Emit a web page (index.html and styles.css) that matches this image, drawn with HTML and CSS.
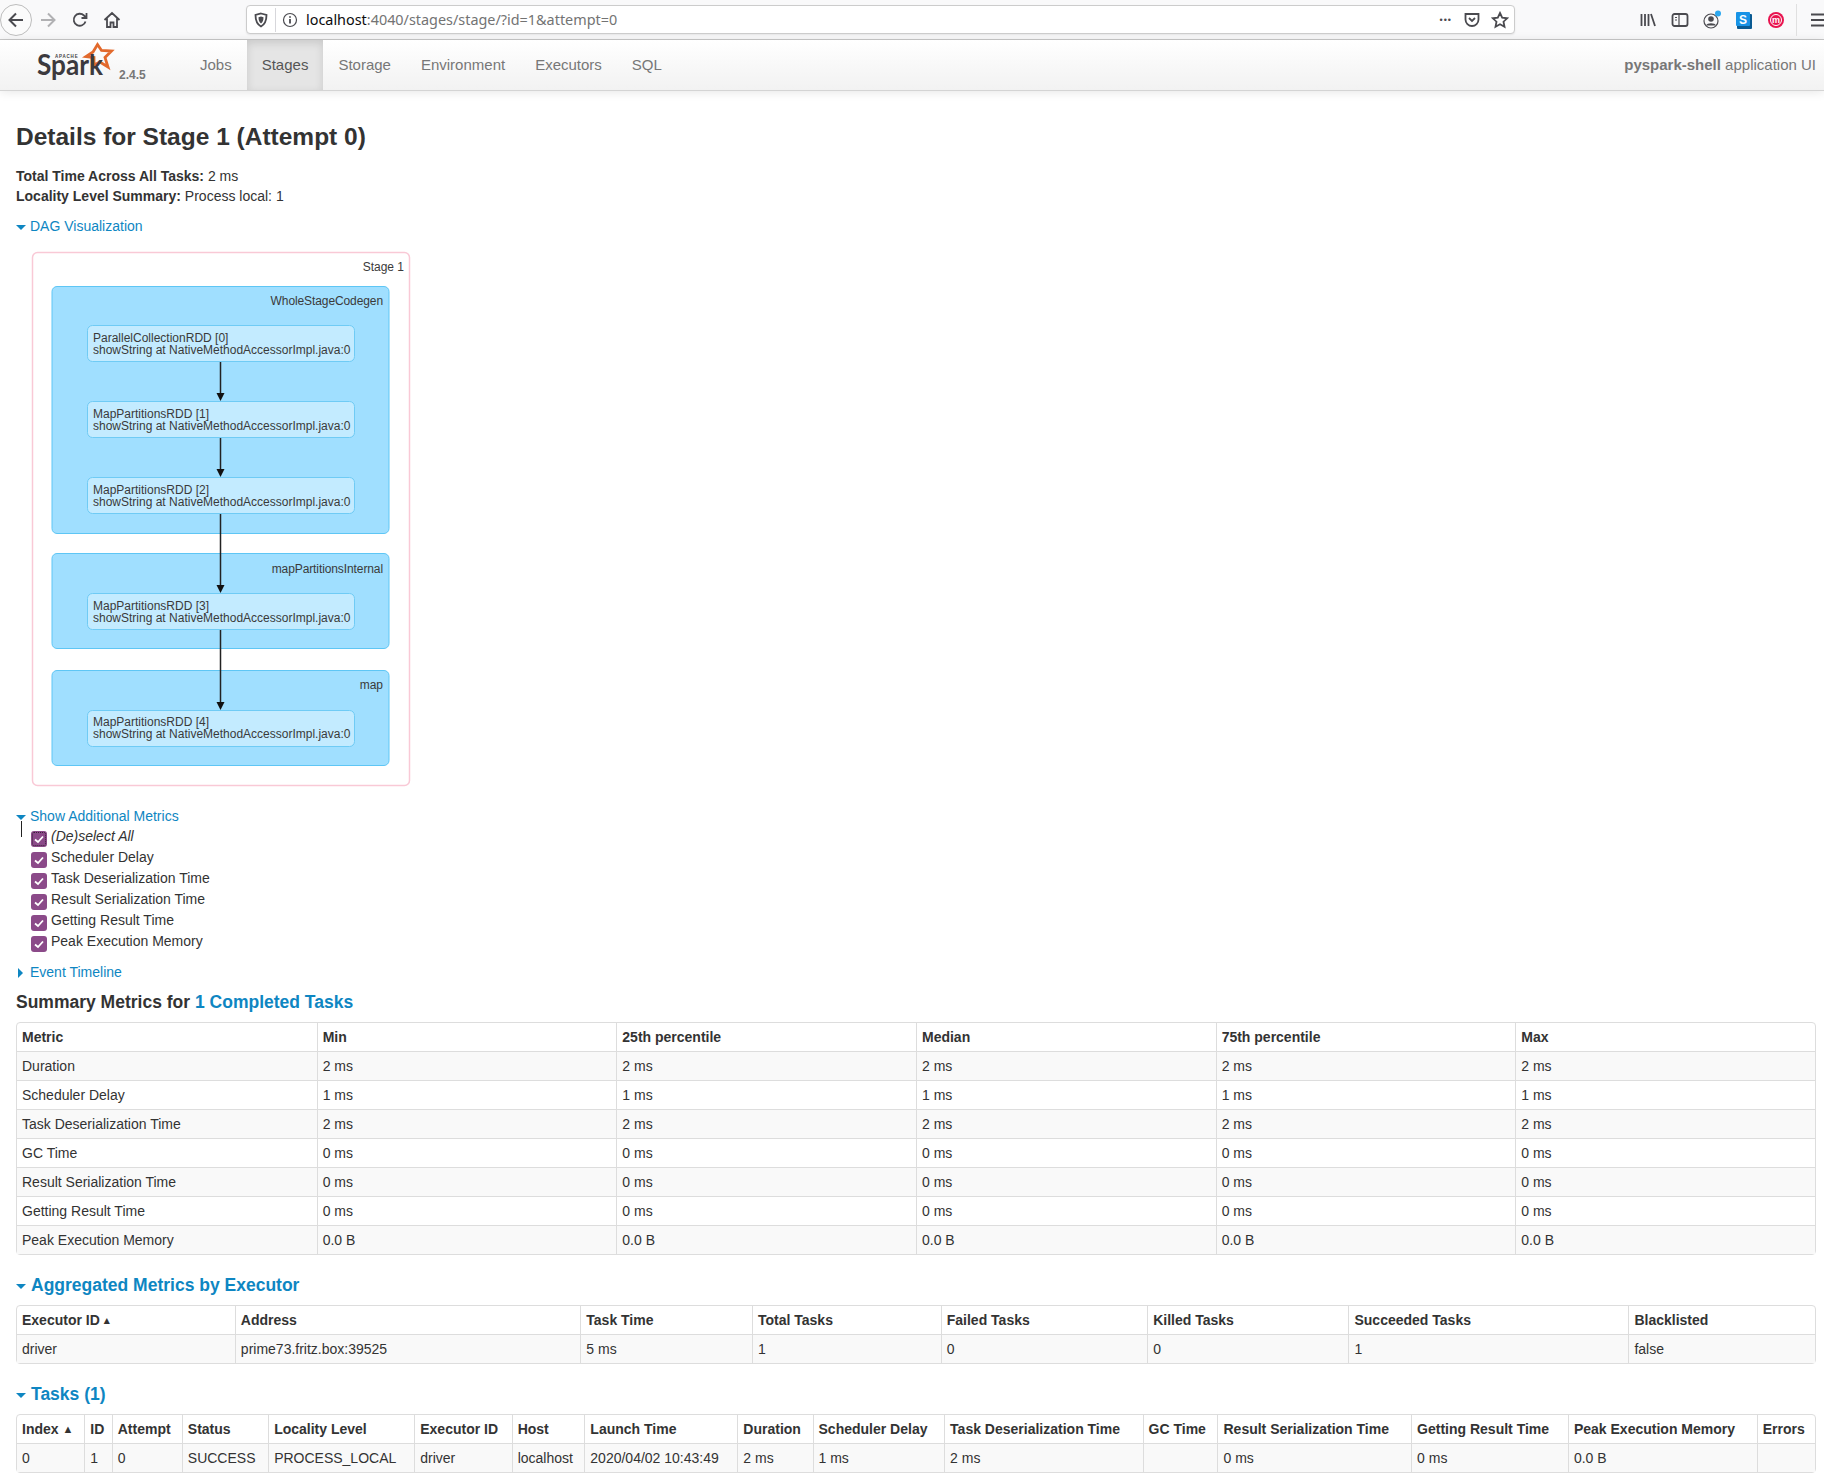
FILE: index.html
```html
<!DOCTYPE html>
<html lang="en">
<head>
  <meta charset="UTF-8">
  <title>pyspark-shell - Details for Stage 1 (Attempt 0)</title>
  <link rel="stylesheet" href="styles.css">
</head>
<body>
  <!-- browser toolbar -->
  <div class="toolbar">
    <span class="tool back">
      <svg width="20" height="20" viewBox="0 0 20 20"><path d="M17 10H4M10 3.500 3.500 10l6.500 6.500" class="ico-line"/></svg>
    </span>
    <span class="tool">
      <svg width="20" height="20" viewBox="0 0 20 20"><path d="M3 10h13M10 3.500 16.500 10 10 16.500" class="ico-line faded"/></svg>
    </span>
    <span class="tool">
      <svg width="20" height="20" viewBox="0 0 20 20"><path d="M15.500 11.500A6 6 0 1 1 14 5.500L16 7.500M16.500 3v5h-5" class="ico-line thin"/></svg>
    </span>
    <span class="tool">
      <svg width="20" height="20" viewBox="0 0 20 20"><path d="M2.500 10 10 3l7.500 7M5 8.500V17h3.500v-4.500h3V17H15V8.500" class="ico-line thin"/></svg>
    </span>

    <div class="urlbar">
      <svg class="url-ico" width="16" height="16" viewBox="0 0 16 16"><path d="M8 1.500 13.500 3c0 5-1 9-5.500 11.500C3.500 12 2.500 8 2.500 3z" class="ico-line thin"/><path d="M8 4.500 10.500 5.300C10.500 8 10 10 8 11.500 6 10 5.500 8 5.500 5.300z" class="ico-fill"/></svg>
      <span class="url-sep"></span>
      <svg class="url-ico" width="16" height="16" viewBox="0 0 16 16"><circle cx="8" cy="8" r="6.500" class="ico-line hair"/><path d="M8 7v4.500M8 4.200v1.600" class="ico-line thin"/></svg>
      <span class="url-text"><span class="url-host">localhost</span>:4040/stages/stage/?id=1&amp;attempt=0</span>
      <span class="url-dots">•••</span>
      <svg class="url-ico" width="18" height="18" viewBox="0 0 18 18"><path d="M2.500 3h13v5.500a6.500 6.500 0 0 1-13 0z" class="ico-line thin"/><path d="M6 7l3 3 3-3" class="ico-line thin"/></svg>
      <svg class="url-ico" width="18" height="18" viewBox="0 0 18 18"><path d="M9 2l2.200 4.700 5 .6-3.700 3.400 1 5L9 13.300l-4.500 2.400 1-5L1.800 7.300l5-.6z" class="ico-line thin"/></svg>
    </div>

    <div class="tool-right">
      <span class="tool">
        <svg width="18" height="18" viewBox="0 0 18 18"><path d="M2.500 3v12M6 3v12M9.500 3v12M12 3l4 12" class="ico-line thin"/></svg>
      </span>
      <span class="tool">
        <svg width="18" height="18" viewBox="0 0 18 18"><rect x="1.500" y="3" width="15" height="12" rx="2" class="ico-line thin"/><path d="M8 3v12M4 6.500h2M4 9h2" class="ico-line hair"/></svg>
      </span>
      <span class="tool">
        <svg width="22" height="22" viewBox="0 0 22 22"><circle cx="10" cy="12" r="7" class="ico-line hair"/><circle cx="10" cy="10" r="2.800" class="ico-fill"/><path d="M5 16.500c1-3 9-3 10 0" class="ico-fill"/><circle cx="17" cy="4.500" r="3" class="dot-blue"/></svg>
      </span>
      <span class="tool">
        <svg width="18" height="18" viewBox="0 0 18 18"><rect x="2" y="3" width="15" height="15" rx="1" class="ext-dark"/><rect x="1" y="1" width="14" height="14" rx="1" class="ext-blue"/><text x="8" y="12.500" class="ext-s">S</text></svg>
      </span>
      <span class="tool">
        <svg width="18" height="18" viewBox="0 0 18 18"><circle cx="9" cy="9" r="8" class="ext-red"/><circle cx="9" cy="9" r="5.500" class="ext-ring"/><text x="9" y="11.500" class="ext-m">m</text></svg>
      </span>
      <span class="tool-sep"></span>
      <span class="tool menu">
        <svg width="14" height="18" viewBox="0 0 14 18"><path d="M1 3.500h13M1 9h13M1 14.500h13" class="ico-line"/></svg>
      </span>
    </div>
  </div>

  <!-- spark nav -->
  <div class="navbar">
    <a class="brand" href="#">
      <svg width="84" height="42" viewBox="0 0 84 42">
        <path d="M63.500 3.500 67.500 9.500 77.500 10 71 16.500 74 26 66 21 60 24 60 16.500 52 15.500 59 11z" class="logo-star"/>
        <text x="21" y="17" class="logo-apache">APACHE</text>
        <text x="3" y="34" class="logo-word" textLength="66" lengthAdjust="spacingAndGlyphs">Spark</text>
      </svg>
      <span class="version">2.4.5</span>
    </a>
    <ul class="nav">
      <li><a href="#">Jobs</a></li>
      <li class="active"><a href="#">Stages</a></li>
      <li><a href="#">Storage</a></li>
      <li><a href="#">Environment</a></li>
      <li><a href="#">Executors</a></li>
      <li><a href="#">SQL</a></li>
    </ul>
    <p class="app-name"><strong>pyspark-shell</strong> application UI</p>
  </div>

  <div class="content">
    <h3>Details for Stage 1 (Attempt 0)</h3>
    <ul class="summary">
      <li><strong>Total Time Across All Tasks:</strong> 2 ms</li>
      <li><strong>Locality Level Summary:</strong> Process local: 1</li>
    </ul>

    <div class="toggle"><span class="arrow-open"></span><a href="#">DAG Visualization</a></div>

    <svg class="dag" width="420" height="556" viewBox="0 240 420 556">
      <rect x="32.500" y="252.500" width="377" height="533" rx="5" class="stage-box"/>
      <text x="404" y="271" class="lbl-end">Stage 1</text>

      <rect x="52" y="286.500" width="337" height="247" rx="5" class="cluster"/>
      <text x="383" y="305" class="lbl-end tight">WholeStageCodegen</text>
      <rect x="52" y="553.500" width="337" height="95" rx="5" class="cluster"/>
      <text x="383" y="573" class="lbl-end tight">mapPartitionsInternal</text>
      <rect x="52" y="670.500" width="337" height="95" rx="5" class="cluster"/>
      <text x="383" y="689" class="lbl-end">map</text>

      <rect x="87.500" y="325.500" width="267" height="36" rx="5" class="node"/>
      <text x="93" y="342" class="lbl">ParallelCollectionRDD [0]</text>
      <text x="93" y="354" class="lbl">showString at NativeMethodAccessorImpl.java:0</text>

      <rect x="87.500" y="401.500" width="267" height="36" rx="5" class="node"/>
      <text x="93" y="418" class="lbl">MapPartitionsRDD [1]</text>
      <text x="93" y="430" class="lbl">showString at NativeMethodAccessorImpl.java:0</text>

      <rect x="87.500" y="477.500" width="267" height="36" rx="5" class="node"/>
      <text x="93" y="494" class="lbl">MapPartitionsRDD [2]</text>
      <text x="93" y="506" class="lbl">showString at NativeMethodAccessorImpl.java:0</text>

      <rect x="87.500" y="593.500" width="267" height="36" rx="5" class="node"/>
      <text x="93" y="610" class="lbl">MapPartitionsRDD [3]</text>
      <text x="93" y="622" class="lbl">showString at NativeMethodAccessorImpl.java:0</text>

      <rect x="87.500" y="710.500" width="267" height="36" rx="5" class="node"/>
      <text x="93" y="726" class="lbl">MapPartitionsRDD [4]</text>
      <text x="93" y="738" class="lbl">showString at NativeMethodAccessorImpl.java:0</text>

      <path d="M220.500 362V394M220.500 438V470M220.500 514V586M220.500 630V703" class="edge"/>
      <path d="M216.500 393h8l-4 8zM216.500 469h8l-4 8zM216.500 585h8l-4 8zM216.500 702h8l-4 8z" class="edge-head"/>
    </svg>

    <div class="toggle metrics-toggle"><span class="arrow-open"></span><a href="#">Show Additional Metrics</a><span class="caret-mark"></span></div>
    <ul class="metrics">
      <li class="focused"><span class="check focus"><svg width="16" height="16" viewBox="0 0 16 16"><path d="M4 8.500 7 11l5-5.500" class="tick"/></svg></span><em>(De)select All</em></li>
      <li><span class="check"><svg width="16" height="16" viewBox="0 0 16 16"><path d="M4 8.500 7 11l5-5.500" class="tick"/></svg></span>Scheduler Delay</li>
      <li><span class="check"><svg width="16" height="16" viewBox="0 0 16 16"><path d="M4 8.500 7 11l5-5.500" class="tick"/></svg></span>Task Deserialization Time</li>
      <li><span class="check"><svg width="16" height="16" viewBox="0 0 16 16"><path d="M4 8.500 7 11l5-5.500" class="tick"/></svg></span>Result Serialization Time</li>
      <li><span class="check"><svg width="16" height="16" viewBox="0 0 16 16"><path d="M4 8.500 7 11l5-5.500" class="tick"/></svg></span>Getting Result Time</li>
      <li><span class="check"><svg width="16" height="16" viewBox="0 0 16 16"><path d="M4 8.500 7 11l5-5.500" class="tick"/></svg></span>Peak Execution Memory</li>
    </ul>

    <div class="toggle timeline-toggle"><span class="arrow-closed"></span><a href="#">Event Timeline</a></div>

    <h4 class="summary-title">Summary Metrics for <a href="#">1 Completed Tasks</a></h4>
    <table class="grid even-cols">
      <thead>
        <tr><th>Metric</th><th>Min</th><th>25th percentile</th><th>Median</th><th>75th percentile</th><th>Max</th></tr>
      </thead>
      <tbody>
        <tr><td>Duration</td><td>2 ms</td><td>2 ms</td><td>2 ms</td><td>2 ms</td><td>2 ms</td></tr>
        <tr><td>Scheduler Delay</td><td>1 ms</td><td>1 ms</td><td>1 ms</td><td>1 ms</td><td>1 ms</td></tr>
        <tr><td>Task Deserialization Time</td><td>2 ms</td><td>2 ms</td><td>2 ms</td><td>2 ms</td><td>2 ms</td></tr>
        <tr><td>GC Time</td><td>0 ms</td><td>0 ms</td><td>0 ms</td><td>0 ms</td><td>0 ms</td></tr>
        <tr><td>Result Serialization Time</td><td>0 ms</td><td>0 ms</td><td>0 ms</td><td>0 ms</td><td>0 ms</td></tr>
        <tr><td>Getting Result Time</td><td>0 ms</td><td>0 ms</td><td>0 ms</td><td>0 ms</td><td>0 ms</td></tr>
        <tr><td>Peak Execution Memory</td><td>0.0 B</td><td>0.0 B</td><td>0.0 B</td><td>0.0 B</td><td>0.0 B</td></tr>
      </tbody>
    </table>

    <h4 class="link-title"><span class="arrow-open"></span><a href="#">Aggregated Metrics by Executor</a></h4>
    <table class="grid">
      <thead>
        <tr><th>Executor ID <span class="sort-mark small">▴</span></th><th>Address</th><th>Task Time</th><th>Total Tasks</th><th>Failed Tasks</th><th>Killed Tasks</th><th>Succeeded Tasks</th><th>Blacklisted</th></tr>
      </thead>
      <tbody>
        <tr><td>driver</td><td>prime73.fritz.box:39525</td><td>5 ms</td><td>1</td><td>0</td><td>0</td><td>1</td><td>false</td></tr>
      </tbody>
    </table>

    <h4 class="link-title"><span class="arrow-open"></span><a href="#">Tasks (1)</a></h4>
    <table class="grid">
      <thead>
        <tr><th>Index <span class="sort-mark">▲</span></th><th>ID</th><th>Attempt</th><th>Status</th><th>Locality Level</th><th>Executor ID</th><th>Host</th><th>Launch Time</th><th>Duration</th><th>Scheduler Delay</th><th>Task Deserialization Time</th><th>GC Time</th><th>Result Serialization Time</th><th>Getting Result Time</th><th>Peak Execution Memory</th><th>Errors</th></tr>
      </thead>
      <tbody>
        <tr><td>0</td><td>1</td><td>0</td><td>SUCCESS</td><td>PROCESS_LOCAL</td><td>driver</td><td>localhost</td><td>2020/04/02 10:43:49</td><td>2 ms</td><td>1 ms</td><td>2 ms</td><td></td><td>0 ms</td><td>0 ms</td><td>0.0 B</td><td></td></tr>
      </tbody>
    </table>
  </div>
</body>
</html>
```

FILE: styles.css
```css
* {
  box-sizing: border-box;
}
body {
  margin: 0;
  font-family: "Liberation Sans", Arial, sans-serif;
  font-size: 14px;
  line-height: 20px;
  color: #333;
  background: #fff;
}
a {
  color: #0e86c2;
  text-decoration: none;
}
ul {
  list-style: none;
  margin: 0;
  padding: 0;
}

/* browser toolbar */
.toolbar {
  display: flex;
  align-items: center;
  height: 40px;
  background: #f9f9fa;
  border-bottom: 1px solid #c8c8c8;
}
.tool {
  flex: 0 0 32px;
  width: 32px;
  height: 32px;
  display: flex;
  align-items: center;
  justify-content: center;
}
.back {
  border: 1px solid #bdbdbd;
  border-radius: 50%;
  background: #fbfbfb;
}
.ico-line {
  fill: none;
  stroke: #4a4a4f;
  stroke-width: 2;
}
.ico-line.thin {
  stroke-width: 1.8;
}
.ico-line.hair {
  stroke-width: 1.2;
}
.ico-line.faded {
  stroke: #b1b1b3;
}
.ico-fill {
  fill: #4a4a4f;
}
.urlbar {
  flex: 0 0 1269px;
  margin-left: 118px;
  height: 29px;
  display: flex;
  align-items: center;
  background: #fff;
  border: 1px solid #ccc;
  border-radius: 4px;
  padding: 0 5px 0 6px;
  box-shadow: 0 1px 2px rgba(0, 0, 0, .08);
}
.url-sep {
  width: 1px;
  height: 24px;
  background: #d7d7db;
  margin: 0 6px;
}
.url-text {
  flex: 1;
  margin-left: 8px;
  font-family: "Noto Sans", sans-serif;
  font-size: 14.400px;
  color: #737373;
}
.url-host {
  color: #0c0c0d;
}
.url-dots {
  font-size: 9px;
  letter-spacing: 1px;
  color: #4a4a4f;
  margin-right: 11px;
}
.url-ico + .url-ico {
  margin-left: 10px;
}
.tool-right {
  display: flex;
  align-items: center;
  margin-left: 117px;
}
.tool-right .menu {
  flex-basis: 27px;
  width: 27px;
  justify-content: flex-end;
}
.tool-sep {
  width: 1px;
  height: 32px;
  background: #e0e0e0;
  margin-left: 4px;
}
.dot-blue {
  fill: #2da9f0;
}
.ext-dark {
  fill: #0a5a92;
}
.ext-blue {
  fill: #1893e6;
}
.ext-s {
  fill: #fff;
  font: bold 12px "Liberation Sans", sans-serif;
  text-anchor: middle;
}
.ext-red {
  fill: #e8144f;
}
.ext-ring {
  fill: none;
  stroke: #fff;
  stroke-width: 1;
}
.ext-m {
  fill: #fff;
  font: bold 9px "Liberation Sans", sans-serif;
  text-anchor: middle;
}

/* spark nav */
.navbar {
  display: flex;
  height: 51px;
  padding-right: 8px;
  background: linear-gradient(#fff, #f2f2f2);
  border-bottom: 1px solid #d4d4d4;
  box-shadow: 0 1px 10px rgba(0, 0, 0, .1);
}
.brand {
  display: flex;
  align-items: flex-start;
  width: 185px;
  padding: 1px 0 0 34px;
}
.version {
  margin: 24px 0 0 1px;
  font-size: 12px;
  font-weight: bold;
  color: #777;
}
.logo-star {
  fill: none;
  stroke: #e2692c;
  stroke-width: 2.800;
  stroke-linejoin: miter;
}
.logo-apache {
  font: bold 4.500px "Liberation Sans", sans-serif;
  letter-spacing: .8px;
  fill: #444;
}
.logo-word {
  font: bold 28px Lato, sans-serif;
  fill: #3c3a3e;
}
.nav {
  display: flex;
  flex: 1;
  margin-left: 0;
}
.nav a {
  display: block;
  padding: 15px 15px;
  font-size: 15px;
  color: #777;
}
.nav .active a {
  color: #555;
  background: #e5e5e5;
  box-shadow: inset 0 3px 8px rgba(0, 0, 0, .125);
}
.app-name {
  margin: 15px 0 0;
  font-size: 15px;
  color: #777;
}

/* page */
.content {
  padding: 0 8px 0 16px;
}
h3 {
  margin: 26px 0 9px;
  font-size: 24.500px;
  line-height: 40px;
  color: #333;
}
.summary li {
  line-height: 20px;
}
.toggle {
  margin-top: 10px;
  height: 20px;
  position: relative;
}
.arrow-open {
  display: inline-block;
  width: 0;
  height: 0;
  margin-right: 4px;
  vertical-align: middle;
  border-left: 5px solid transparent;
  border-right: 5px solid transparent;
  border-top: 5px solid #0e86c2;
}
.arrow-closed {
  display: inline-block;
  width: 0;
  height: 0;
  margin: 0 7px 0 2px;
  vertical-align: middle;
  border-top: 5px solid transparent;
  border-bottom: 5px solid transparent;
  border-left: 5px solid #0e86c2;
}
.dag {
  display: block;
  margin: 4px 0 0 -16px;
}
.dag text {
  font-family: "Liberation Sans", sans-serif;
  font-size: 12px;
  fill: #3a3a3a;
}
.dag .lbl-end {
  text-anchor: end;
}
.dag .tight {
  letter-spacing: -.1px;
}
.stage-box {
  fill: #fff;
  stroke: #f9c9d6;
  stroke-width: 1.500;
}
.cluster {
  fill: #a0dfff;
  stroke: #5ec6f5;
  stroke-width: 1;
}
.node {
  fill: #c3ebff;
  stroke: #6fcbf5;
  stroke-width: 1;
}
.edge {
  fill: none;
  stroke: #222;
  stroke-width: 1.500;
}
.edge-head {
  fill: #111;
}
.metrics-toggle {
  margin-top: 10px;
}
.caret-mark {
  position: absolute;
  left: 5px;
  top: 15px;
  width: 1px;
  height: 16px;
  background: #222;
}
.metrics {
  margin: 0 0 0 15px;
}
.metrics li {
  display: flex;
  height: 21px;
}
.check {
  flex: 0 0 16px;
  width: 16px;
  height: 16px;
  margin: 5px 4px 0 0;
  background: #8b4a89;
  border-radius: 3px;
}
.check svg {
  display: block;
}
.check.focus {
  outline: 1px dotted #3a2238;
  outline-offset: -2px;
}
.tick {
  fill: none;
  stroke: #fff;
  stroke-width: 1.800;
}
.timeline-toggle {
  margin-top: 10px;
}
h4 {
  font-size: 17.500px;
  line-height: 20px;
  margin: 10px 0;
  color: #333;
}
.grid {
  width: 100%;
  margin-bottom: 20px;
  border: 1px solid #ddd;
  border-left-width: 1px;
  border-collapse: separate;
  border-spacing: 0;
  border-radius: 4px;
}
.grid th,
.grid td {
  padding: 4px 5px;
  text-align: left;
  vertical-align: top;
  border-left: 1px solid #ddd;
  border-top: 1px solid #ddd;
}
.grid th:first-child,
.grid td:first-child {
  border-left: 0;
}
.grid thead tr:first-child th {
  border-top: 0;
}
.grid th {
  font-weight: bold;
}
.grid tbody tr:nth-child(odd) td {
  background: #f9f9f9;
}
.even-cols {
  table-layout: fixed;
}
.sort-mark {
  display: inline-block;
  height: 20px;
  line-height: 20px;
  vertical-align: top;
  font-size: 11px;
}
.sort-mark.small {
  padding-right: 1.500px;
}
.link-title .arrow-open {
  margin-right: 5px;
}
```
